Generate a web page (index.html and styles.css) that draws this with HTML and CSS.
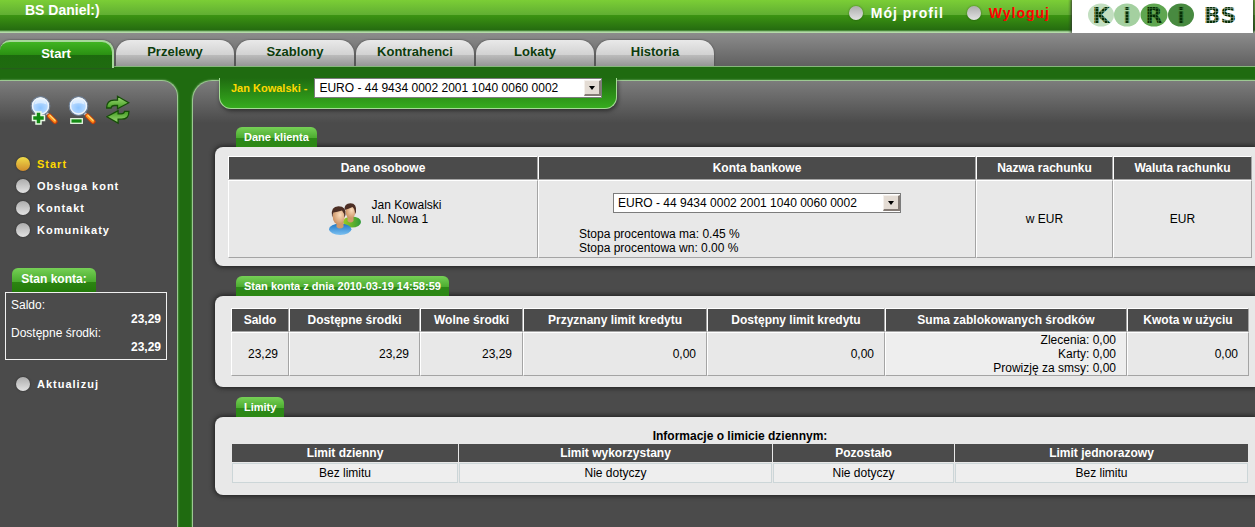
FILE: index.html
```html
<!DOCTYPE html>
<html lang="pl">
<head>
    <meta charset="UTF-8">
    <meta name="viewport" content="width=device-width, initial-scale=1.0">
    <title>KIRI BS</title>
    <link rel="stylesheet" href="styles.css">
</head>
<body>
    <header class="top">
        <div class="bank-name">BS Daniel:)</div>
        <div class="user-links">
            <a href="#"><span class="dot"></span>Mój profil</a>
            <a href="#" class="logout"><span class="dot"></span>Wyloguj</a>
        </div>
        <div class="logo">
            <svg width="152" height="28" viewBox="0 0 152 28">
                <defs>
                    <pattern id="dots" width="3" height="3" patternUnits="userSpaceOnUse">
                        <rect width="3" height="3" fill="#062e06" fill-opacity="0.4"/>
                        <rect width="2.4" height="2.4" fill="#062e06"/>
                    </pattern>
                </defs>
                <ellipse cx="14" cy="15" rx="13" ry="11.5" fill="#c2dfc0"/>
                <ellipse cx="40" cy="15" rx="13" ry="11.5" fill="#a4d0a0"/>
                <ellipse cx="67" cy="15" rx="13.5" ry="11.5" fill="#5fa650"/>
                <ellipse cx="94" cy="15" rx="13" ry="11.5" fill="#488a40"/>
                <g class="logo-text" fill="url(#dots)">
                    <text x="14" y="23">K</text>
                    <text x="40" y="23">i</text>
                    <text x="67" y="23">R</text>
                    <text x="94" y="23">i</text>
                    <text x="133" y="23">BS</text>
                </g>
            </svg>
        </div>
    </header>

    <nav class="tabs">
        <a href="#" class="active">Start</a>
        <a href="#">Przelewy</a>
        <a href="#">Szablony</a>
        <a href="#">Kontrahenci</a>
        <a href="#">Lokaty</a>
        <a href="#">Historia</a>
    </nav>

    <div class="layout">
        <aside class="sidebar">
            <div class="tools">
                <button type="button" aria-label="Powiększ">
                    <svg width="28" height="30" viewBox="0 0 28 30">
                        <use href="#magnifier"/>
                        <path d="M6 17h5v3.500h3.500v5H11V29H6v-3.500H2.500v-5H6z" fill="#138a13" stroke="#e8f8e4" stroke-width="1.500"/>
                    </svg>
                </button>
                <button type="button" aria-label="Pomniejsz">
                    <svg width="28" height="30" viewBox="0 0 28 30">
                        <defs>
                            <radialGradient id="lens" cx="50%" cy="60%" r="60%">
                                <stop offset="0" stop-color="#8cc4ff"/>
                                <stop offset="0.6" stop-color="#b4d8ff"/>
                                <stop offset="1" stop-color="#f0f8ff"/>
                            </radialGradient>
                            <g id="magnifier">
                                <path d="M16 17.500l3 3" stroke="#c0c0c0" stroke-width="3"/>
                                <path d="M19.500 21l5.500 5.500" stroke="#c8400a" stroke-width="5" stroke-linecap="round"/>
                                <path d="M19.500 20.800l5.300 5.300" stroke="#ff9420" stroke-width="3.200" stroke-linecap="round"/>
                                <path d="M20 20.300l5 5" stroke="#ffe47c" stroke-width="1.200" stroke-linecap="round"/>
                                <circle cx="10.500" cy="11" r="9.300" fill="url(#lens)" stroke="#6f7f94" stroke-width="1.200"/>
                                <circle cx="10.500" cy="11" r="8" fill="none" stroke="#f0f4f8" stroke-width="1.300"/>
                                <path d="M4.500 9.500q1-6 6-6t6 6q-6-2.500-12 0z" fill="#fff" fill-opacity="0.500"/>
                            </g>
                        </defs>
                        <use href="#magnifier"/>
                        <rect x="2.800" y="23.700" width="11.500" height="4.600" fill="#138a13" stroke="#e8f8e4" stroke-width="1.300"/>
                    </svg>
                </button>
                <button type="button" aria-label="Odśwież">
                    <svg width="24" height="30" viewBox="1 0 24 30">
                        <defs>
                            <linearGradient id="arrow" x1="0" y1="0" x2="0" y2="1">
                                <stop offset="0" stop-color="#a0dc78"/>
                                <stop offset="1" stop-color="#3f9a1e"/>
                            </linearGradient>
                        </defs>
                        <path id="arrow-right" d="M1.700 13Q1.500 5.300 9 5.200h3.500V1.300l11.300 6.400-11.300 6v-3.200H9.500Q6.500 10.500 6 13z" fill="url(#arrow)" stroke="#164e08" stroke-width="1.300"/>
                        <use href="#arrow-right" transform="rotate(180 12.800 14.700)"/>
                    </svg>
                </button>
            </div>

            <ul class="menu">
                <li><a href="#" class="current"><span class="dot"></span>Start</a></li>
                <li><a href="#"><span class="dot"></span>Obsługa kont</a></li>
                <li><a href="#"><span class="dot"></span>Kontakt</a></li>
                <li><a href="#"><span class="dot"></span>Komunikaty</a></li>
            </ul>

            <h2 class="balance-title">Stan konta:</h2>
            <dl class="balance">
                <dt>Saldo:</dt>
                <dd>23,29</dd>
                <dt>Dostępne środki:</dt>
                <dd>23,29</dd>
            </dl>

            <ul class="menu">
                <li><a href="#"><span class="dot"></span>Aktualizuj</a></li>
            </ul>
        </aside>

        <main class="content">
            <form class="client">
                <label for="account">Jan Kowalski -</label>
                <span class="select">
                    <select id="account">
                        <option>EURO - 44 9434 0002 2001 1040 0060 0002</option>
                    </select>
                    <span class="select-arrow"></span>
                </span>
            </form>

            <section class="box">
                <h2 class="box-title">Dane klienta</h2>
                <div class="box-body box-client">
                    <table class="grid">
                        <colgroup>
                            <col class="col-person">
                            <col>
                            <col class="col-name">
                            <col class="col-currency">
                        </colgroup>
                        <thead>
                            <tr>
                                <th>Dane osobowe</th>
                                <th>Konta bankowe</th>
                                <th>Nazwa rachunku</th>
                                <th>Waluta rachunku</th>
                            </tr>
                        </thead>
                        <tbody>
                            <tr>
                                <td>
                                    <div class="person">
                                        <svg width="32" height="32" viewBox="0 0 32 32">
                                            <defs>
                                                <radialGradient id="skin" cx="60%" cy="40%" r="65%">
                                                    <stop offset="0" stop-color="#fbdcbc"/>
                                                    <stop offset="1" stop-color="#c98e5e"/>
                                                </radialGradient>
                                                <linearGradient id="blue" x1="0" y1="0" x2="0" y2="1">
                                                    <stop offset="0" stop-color="#1c78c8"/>
                                                    <stop offset="1" stop-color="#7cc0f0"/>
                                                </linearGradient>
                                                <linearGradient id="green" x1="0" y1="0" x2="1" y2="0">
                                                    <stop offset="0" stop-color="#9ccc20"/>
                                                    <stop offset="1" stop-color="#2e9a38"/>
                                                </linearGradient>
                                            </defs>
                                            <ellipse cx="23" cy="19" rx="9" ry="5.500" fill="url(#green)"/>
                                            <path d="M18.500 14h6v4q-3 3-6 0z" fill="#d09a6c"/>
                                            <ellipse cx="21.500" cy="8.500" rx="5" ry="7" fill="url(#skin)"/>
                                            <path d="M15.500 7Q15 .5 21.500.3 28 .5 27 9l-1 2q0-5-2.500-7-4 2-8 3z" fill="#4c2e24"/>
                                            <ellipse cx="11.200" cy="26.300" rx="11.200" ry="5.700" fill="url(#blue)"/>
                                            <path d="M7.500 19h7v5q-3.500 3-7 0z" fill="#d09a6c"/>
                                            <ellipse cx="9.700" cy="13.500" rx="6" ry="8" fill="url(#skin)"/>
                                            <path d="M3 13Q1.500 3.500 9.500 3.300 17.500 3.500 16.500 12l-1.200 2.500q.2-4.500-2.300-7Q8 9 4.500 9.500 3.500 11 3.500 14z" fill="#4c2e24"/>
                                        </svg>
                                        <address>Jan Kowalski<br>ul. Nowa 1</address>
                                    </div>
                                </td>
                                <td class="accounts">
                                    <span class="select">
                                        <select aria-label="Konta bankowe">
                                            <option>EURO - 44 9434 0002 2001 1040 0060 0002</option>
                                        </select>
                                        <span class="select-arrow"></span>
                                    </span>
                                    <p class="rates">Stopa procentowa ma: 0.45 %<br>Stopa procentowa wn: 0.00 %</p>
                                </td>
                                <td>w EUR</td>
                                <td>EUR</td>
                            </tr>
                        </tbody>
                    </table>
                </div>
            </section>

            <section class="box">
                <h2 class="box-title">Stan konta z dnia 2010-03-19 14:58:59</h2>
                <div class="box-body box-state">
                    <table class="grid amounts">
                        <colgroup>
                            <col class="col-balance">
                            <col class="col-available">
                            <col class="col-free">
                            <col class="col-granted">
                            <col class="col-credit">
                            <col>
                            <col class="col-used">
                        </colgroup>
                        <thead>
                            <tr>
                                <th>Saldo</th>
                                <th>Dostępne środki</th>
                                <th>Wolne środki</th>
                                <th>Przyznany limit kredytu</th>
                                <th>Dostępny limit kredytu</th>
                                <th>Suma zablokowanych środków</th>
                                <th>Kwota w użyciu</th>
                            </tr>
                        </thead>
                        <tbody>
                            <tr>
                                <td>23,29</td>
                                <td>23,29</td>
                                <td>23,29</td>
                                <td>0,00</td>
                                <td>0,00</td>
                                <td class="blocked">Zlecenia: 0,00<br>Karty: 0,00<br>Prowizję za smsy: 0,00</td>
                                <td>0,00</td>
                            </tr>
                        </tbody>
                    </table>
                </div>
            </section>

            <section class="box">
                <h2 class="box-title">Limity</h2>
                <div class="box-body box-limits">
                    <table class="limits">
                        <caption>Informacje o limicie dziennym:</caption>
                        <colgroup>
                            <col class="col-daily">
                            <col>
                            <col class="col-left">
                            <col class="col-single">
                        </colgroup>
                        <thead>
                            <tr>
                                <th>Limit dzienny</th>
                                <th>Limit wykorzystany</th>
                                <th>Pozostało</th>
                                <th>Limit jednorazowy</th>
                            </tr>
                        </thead>
                        <tbody>
                            <tr>
                                <td>Bez limitu</td>
                                <td>Nie dotyczy</td>
                                <td>Nie dotyczy</td>
                                <td>Bez limitu</td>
                            </tr>
                        </tbody>
                    </table>
                </div>
            </section>
        </main>
    </div>
</body>
</html>
```

FILE: styles.css
```css
* {
    box-sizing: border-box;
}

body {
    display: flex;
    flex-direction: column;
    min-height: 100vh;
    margin: 0;
    background: #1f6b10;
    color: #000000;
    font-family: "Liberation Sans", Arial, sans-serif;
    font-size: 12px;
    line-height: 14px;
}

a {
    text-decoration: none;
}

h2, p, ul, dl, dd {
    margin: 0;
    padding: 0;
}

/* header */
.top {
    display: flex;
    height: 33px;
    padding: 0 2px 0 25px;
    background: linear-gradient(#7bce36 0, #60ae32 15px, #3c9412 15px, #256c10 30px, #6fa862 31px, #b4dba8 32px, #b4dba8 33px);
}

.bank-name {
    padding-top: 3px;
    color: #ffffff;
    font-size: 14px;
    font-weight: bold;
}

.user-links {
    display: flex;
    gap: 23px;
    height: 26px;
    margin-left: auto;
    margin-right: 22px;
}

.user-links a {
    display: flex;
    align-items: center;
    gap: 8px;
    color: #ffffff;
    font-size: 14px;
    font-weight: bold;
    letter-spacing: 1px;
}

.user-links .logout {
    color: #ff0000;
}

.dot {
    flex: none;
    width: 14px;
    height: 14px;
    border-radius: 50%;
    background: linear-gradient(#adadad, #e2e2e2);
    box-shadow: 0 0 2px rgba(0, 0, 0, 0.5);
}

.logo {
    display: flex;
    justify-content: center;
    width: 181px;
    background: #ffffff;
    box-shadow: 0 0 3px 1px #333333;
    clip-path: inset(0 -4px 0 -4px);
}

.logo-text {
    font-family: "DejaVu Sans", sans-serif;
    font-size: 22px;
    font-weight: bold;
    text-anchor: middle;
}

/* main navigation */
.tabs {
    display: flex;
    align-items: flex-end;
    gap: 2px;
    height: 34px;
    background: linear-gradient(#8c8c8c, #606060);
    border-bottom: 1px solid #86b87c;
}

.tabs a {
    width: 118px;
    height: 26px;
    padding-top: 5px;
    border-radius: 14px 14px 0 0;
    background: linear-gradient(#e9e9e9 0, #d2d2d2 15px, #bcbcbc 15px, #969696 26px);
    box-shadow: 0 0 2px #3c3c3c;
    clip-path: inset(-3px -3px 0 -3px);
    color: #0c3c0c;
    font-size: 13px;
    font-weight: bold;
    text-align: center;
}

.tabs .active {
    width: 114px;
    height: 28px;
    margin-bottom: -2px;
    padding-top: 5px;
    border: solid #a8d89c;
    border-width: 2px 2px 0 0;
    border-radius: 10px 12px 0 0;
    background: linear-gradient(#40b422 0, #2a9012 13px, #1d6a0e 13px, #1f6b10 26px);
    clip-path: none;
    color: #ffffff;
}

/* columns */
.layout {
    display: flex;
    flex: 1;
    gap: 14px;
    padding-top: 13px;
}

.sidebar, .content {
    border: 1px solid #9cc892;
    background: linear-gradient(#7c7c7c, #4b4b4b 42px);
    box-shadow: 0 0 2px #8fc084;
}

.sidebar {
    width: 178px;
    padding: 14px 9px 20px 5px;
    border-width: 1px 1px 0 0;
    border-radius: 0 16px 0 0;
}

.content {
    flex: 1;
    min-width: 0;
    padding: 0 0 20px 22px;
    border-width: 1px 0 0 1px;
    border-radius: 20px 0 0 0;
}

/* sidebar */
.tools {
    display: flex;
    gap: 10px;
    height: 58px;
    padding-left: 25px;
}

.tools button {
    height: 30px;
    padding: 0;
    border: 0;
    background: none;
}

.tools svg {
    display: block;
}

.menu {
    padding-left: 11px;
    list-style: none;
}

.menu a {
    display: flex;
    align-items: center;
    gap: 7px;
    height: 22px;
    color: #ffffff;
    font-size: 11px;
    font-weight: bold;
    letter-spacing: 1px;
}

.menu .current {
    color: #ffd800;
}

.menu .current .dot {
    background: linear-gradient(#f0dc48, #d08c2c);
}

.balance-title {
    width: 84px;
    height: 24px;
    margin: 27px 0 0 7px;
    padding-top: 4px;
    border-radius: 6px 6px 0 0;
    background: linear-gradient(#76d056 0, #48aa2c 14px, #2c8412 14px, #237a0a 24px);
    color: #ffffff;
    font-size: 12px;
    text-align: center;
}

.balance {
    width: 162px;
    margin-bottom: 13px;
    padding: 5px;
    border: 1px solid #f0f0f0;
    color: #ffffff;
}

.balance dd {
    font-weight: bold;
    text-align: right;
}

/* account picker hanging from the top bar */
.client {
    position: relative;
    display: flex;
    align-items: flex-start;
    gap: 7px;
    width: 398px;
    height: 31px;
    margin: -3px 0 18px 4px;
    padding-left: 11px;
    border: solid #a4dc94;
    border-width: 0 1px 1px 1px;
    border-radius: 0 0 12px 12px;
    background: linear-gradient(#1f6b10, #36ac1e);
    box-shadow: 1px 2px 4px rgba(0, 0, 0, 0.5);
    clip-path: inset(0 -6px -8px -6px);
}

.client label {
    padding-top: 3px;
    color: #ffd800;
    font-size: 11px;
    font-weight: bold;
}

.select {
    position: relative;
    display: inline-block;
    width: 288px;
    height: 20px;
}

.select select {
    display: block;
    width: 100%;
    height: 20px;
    padding: 0 20px 0 4px;
    border: 1px solid #7c7c7c;
    border-radius: 0;
    background: #ffffff;
    color: #000000;
    font-family: inherit;
    font-size: 12px;
    appearance: none;
}

.select-arrow {
    position: absolute;
    top: 2px;
    right: 1px;
    display: flex;
    align-items: center;
    justify-content: center;
    width: 17px;
    height: 16px;
    border: solid;
    border-width: 1px 2px 2px 1px;
    border-color: #f4f0ec #857c76 #857c76 #f4f0ec;
    background: #e4dcd4;
    pointer-events: none;
}

.select-arrow::after {
    content: "";
    border: solid transparent;
    border-width: 4px 3px 0 3px;
    border-top-color: #000000;
}

/* boxes */
.box {
    margin-bottom: 10px;
}

.box-title {
    position: relative;
    width: fit-content;
    height: 20px;
    margin-left: 21px;
    padding: 3px 8px 0;
    border-radius: 6px 6px 0 0;
    background: linear-gradient(#76d056 0, #4cac30 11px, #2c8818 11px, #2c8814 20px);
    color: #ffffff;
    font-size: 11px;
}

.box-body {
    border-radius: 8px 0 0 8px;
    background: #e8e8e8;
    box-shadow: 0 0 5px 1px #1e1e1e;
}

.box-client {
    padding: 9px 3px 8px 13px;
}

.box-state,
.box-limits {
    padding: 12px 6px 11px 16px;
}

table {
    width: 100%;
    table-layout: fixed;
    text-align: center;
}

th {
    background: #4b4b4b;
    color: #ffffff;
}

.grid {
    border-spacing: 0;
}

.grid th, .grid td {
    padding: 0;
    border: 1px solid;
    border-color: #ffffff #a4a4a4 #a4a4a4 #ffffff;
}

.grid th {
    height: 24px;
}

.grid td {
    height: 78px;
}

.col-person {
    width: 310px;
}

.col-name {
    width: 137px;
}

.col-currency {
    width: 139px;
}

.person {
    display: flex;
    align-items: center;
    justify-content: center;
    gap: 10px;
    padding-left: 5px;
    text-align: left;
}

.person address {
    padding-bottom: 14px;
    font-style: normal;
}

.grid .accounts {
    padding-top: 12px;
    vertical-align: top;
}

.accounts .select {
    display: block;
    margin: 0 auto;
}

.rates {
    padding: 14px 0 0 40px;
    text-align: left;
}

.grid.amounts td {
    height: 44px;
    padding-right: 10px;
    text-align: right;
}

.amounts .blocked {
    background: #eeeeee;
}

.col-balance {
    width: 58px;
}

.col-available {
    width: 131px;
}

.col-free {
    width: 103px;
}

.col-granted {
    width: 184px;
}

.col-credit {
    width: 178px;
}

.col-used {
    width: 122px;
}

.limits {
    border-spacing: 1px;
}

.limits caption {
    font-weight: bold;
}

.limits th {
    height: 18px;
    padding: 0;
}

.limits td {
    height: 20px;
    padding: 0;
    border: 1px solid #ccd6d8;
    background: #eeeeee;
}

.col-daily {
    width: 226px;
}

.col-left {
    width: 181px;
}

.col-single {
    width: 293px;
}
```
